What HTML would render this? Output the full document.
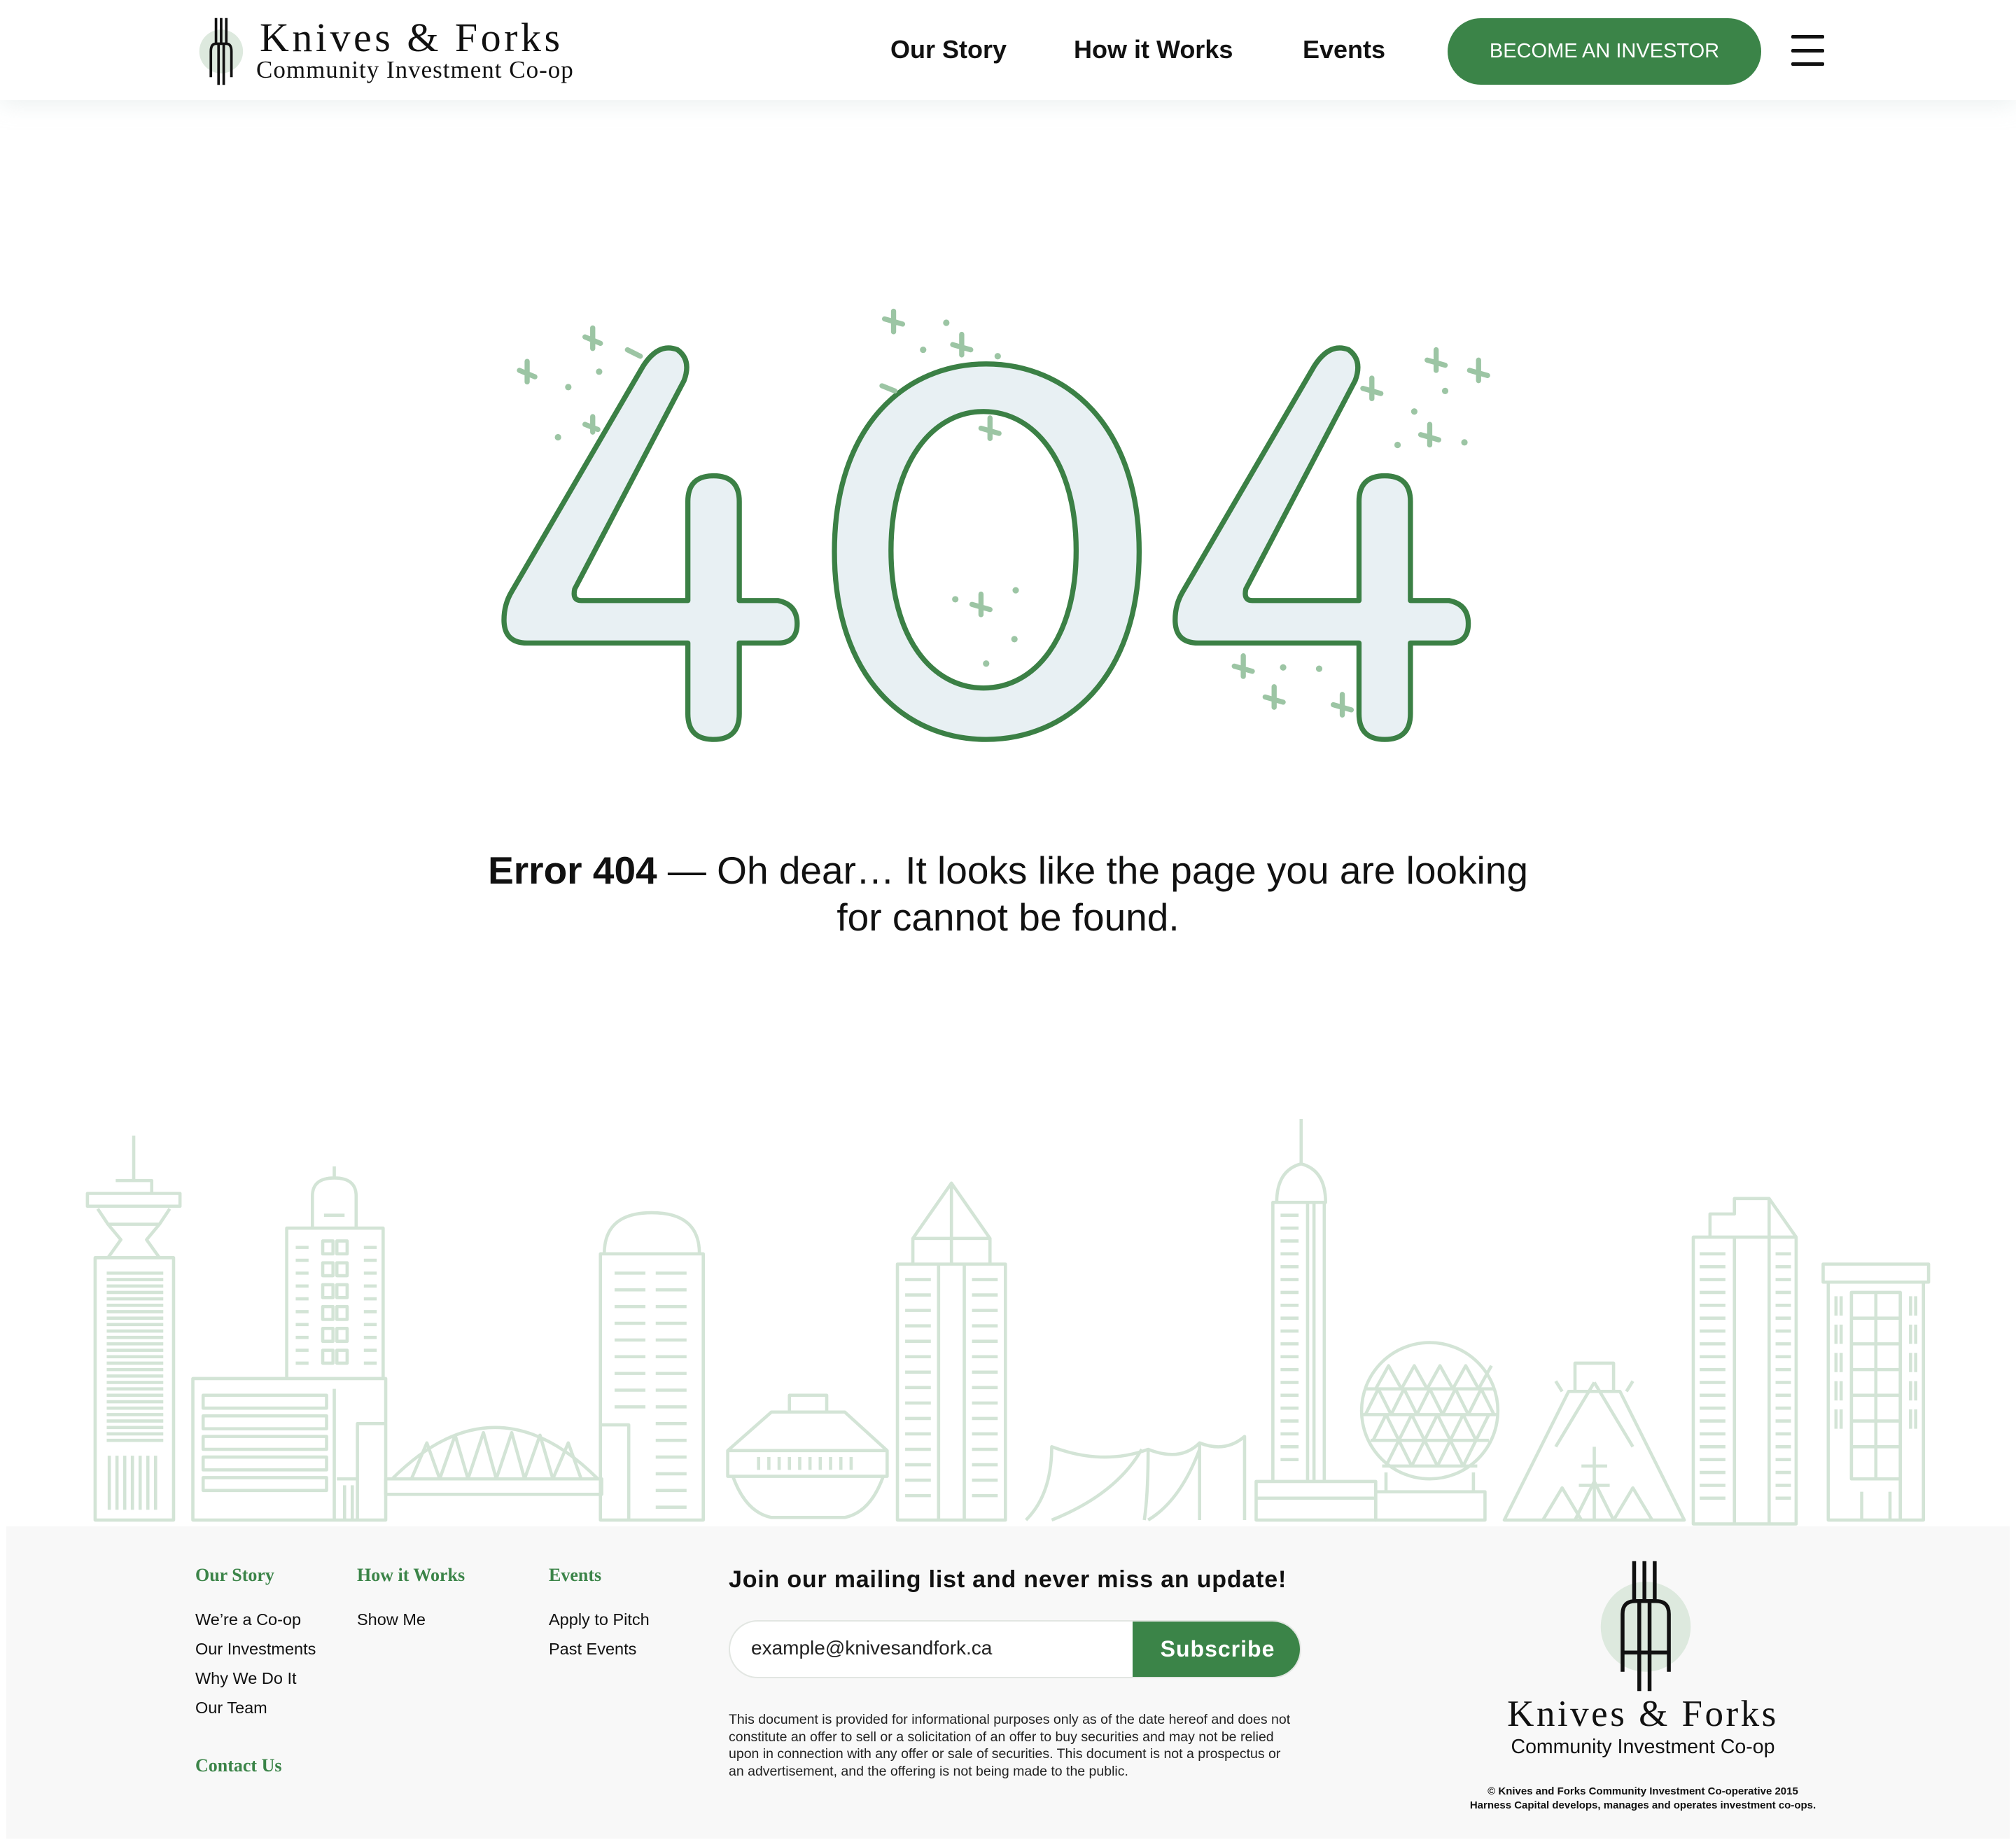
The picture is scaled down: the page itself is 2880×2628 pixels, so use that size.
<!DOCTYPE html>
<html><head><meta charset="utf-8"><style>
*{margin:0;padding:0;box-sizing:border-box}
body{width:2880px;height:2628px;position:relative;background:#fff;font-family:"Liberation Sans",sans-serif;color:#111;overflow:hidden}
.a{position:absolute;white-space:nowrap}
.hdr{position:absolute;left:0;top:0;width:2880px;height:143px;background:#fff;box-shadow:0 6px 30px rgba(200,215,215,0.35)}
.nav{font-size:36px;font-weight:bold;top:50px;color:#111}
.btn{left:2068px;top:26px;width:448px;height:95px;border-radius:48px;background:#3b8448;color:#fff;font-size:29px;text-align:center;line-height:95px}
.hb{left:2559px;width:47px;height:5px;background:#111;border-radius:2px}
.foot{position:absolute;left:9px;top:2180px;width:2862px;height:446px;background:#f8f8f8}
.fh{font-family:"Liberation Serif",serif;font-weight:bold;color:#3b8448;font-size:26px}
.fl{font-size:23.5px;color:#111}
</style></head><body>
<div class="hdr"></div>
<svg class="a" style="left:0;top:0" width="2880" height="2628" viewBox="0 0 1568 1430.8">
<circle cx="172" cy="40" r="17" fill="#dde9de"/>
<g stroke="#111" stroke-width="2" fill="none">
<path d="M168 14v20M172 14v20M176 14v20M164 60V40q0-6 4-6h8q4 0 4 6v20M170 34v32M174 34v32"/>
</g>
<g fill="#e8f0f3" stroke="#3b8045" stroke-width="4" stroke-linejoin="round">
<path id="four" d="M500 285Q512 266 527 272Q538 280 532 296L447 458Q445 467 452 467L535 467L535 390Q535 370 555 370Q575 370 575 390L575 467L605 467Q620 470 620 485Q620 500 605 500L575 500L575 555Q575 575 555 575Q535 575 535 555L535 500L410 500Q392 500 392 482Q392 470 398 460Z"/>
<use href="#four" x="522"/>
<path fill-rule="evenodd" d="M767 283C705 283 649 330 649 429C649 528 705 575 767 575C829 575 886 528 886 429C886 330 829 283 767 283ZM765 320C725 320 693 360 693 428C693 496 725 535 765 535C805 535 837 496 837 428C837 360 805 320 765 320Z"/>
</g>
<g stroke="#9cc5a4" stroke-width="4" stroke-linecap="round" fill="#9cc5a4">
<path d="M404 288l12 5M410 281l0 16M455 262l12 5M461 255l0 16M488 272l10 5M688 248l14 4M695 242l0 16M741 268l14 4M748 260l0 16M763 333l14 4M770 325l0 16M756 470l14 4M763 462l0 16M1110 280l14 4M1117 272l0 16M1143 288l14 4M1150 280l0 16M1060 302l14 4M1067 294l0 16M1105 338l14 4M1112 330l0 16M960 518l14 4M967 510l0 16M984 542l14 4M991 534l0 16M1037 548l14 4M1044 540l0 16M455 330l10 4M461 324l0 12M686 300l10 4"/>
<g stroke="none"><circle cx="442" cy="301" r="2.5"/><circle cx="434" cy="340" r="2.5"/><circle cx="466" cy="289" r="2.5"/><circle cx="736" cy="251" r="2.5"/><circle cx="718" cy="272" r="2.5"/><circle cx="776" cy="277" r="2.5"/><circle cx="743" cy="466" r="2.5"/><circle cx="790" cy="459" r="2.5"/><circle cx="789" cy="497" r="2.5"/><circle cx="767" cy="516" r="2.5"/><circle cx="1124" cy="304" r="2.5"/><circle cx="1100" cy="320" r="2.5"/><circle cx="1087" cy="346" r="2.5"/><circle cx="1139" cy="344" r="2.5"/><circle cx="998" cy="519" r="2.5"/><circle cx="1026" cy="520" r="2.5"/></g>
</g>
<g fill="none" stroke="#d3e4d6" stroke-width="2.5" stroke-linejoin="round">
<path d="M104 883v35M90 918h28v10M68 928h72v10H68zM76 940l8 12h40l8-12M84 952l10 12l-10 14M124 952l-10 12l10 14M74 978h61v204H74z"/>
<path d="M83 990h44M83 995h44M83 1000h44M83 1005h44M83 1010h44M83 1015h44M83 1020h44M83 1025h44M83 1030h44M83 1035h44M83 1040h44M83 1045h44M83 1050h44M83 1055h44M83 1060h44M83 1065h44M83 1070h44M83 1075h44M83 1080h44M83 1085h44M83 1090h44M83 1095h44M83 1100h44M83 1105h44M83 1110h44M83 1115h44M83 1120h44M85 1132v42M91 1132v42M97 1132v42M103 1132v42M109 1132v42M115 1132v42M121 1132v42"/>
<path d="M150 1072h150v110H150zM158 1085h96v10h-96zM158 1101h96v10h-96zM158 1117h96v10h-96zM158 1133h96v10h-96zM158 1149h96v10h-96zM223 1072V955h75v117M243 955v-25q0-14 17-14t17 14v25M260 916v-9M252 945h16M251 965h8v10h-8zM262 965h8v10h-8zM251 982h8v10h-8zM262 982h8v10h-8zM251 999h8v10h-8zM262 999h8v10h-8zM251 1016h8v10h-8zM262 1016h8v10h-8zM251 1033h8v10h-8zM262 1033h8v10h-8zM251 1050h8v10h-8zM262 1050h8v10h-8zM230 970h10M230 980h10M230 990h10M230 1000h10M230 1010h10M230 1020h10M230 1030h10M230 1040h10M230 1050h10M230 1060h10M283 970h10M283 980h10M283 990h10M283 1000h10M283 1010h10M283 1020h10M283 1030h10M283 1040h10M283 1050h10M283 1060h10M260 1080v102M278 1182v-75h22v75M262 1150h15M268 1155v27M274 1155v27"/>
<path d="M300 1150h168v12H300zM305 1150q80-80 160 0M320 1150l12-28l10 28l12-34l10 34l12-36l10 36l12-36l10 36l12-34l10 34l12-28l10 28"/>
<path d="M467 975h80v207h-80zM470 975q0-32 37-32t37 32M478 990h24M510 990h24M478 1003h24M510 1003h24M478 1016h24M510 1016h24M478 1029h24M510 1029h24M478 1042h24M510 1042h24M478 1055h24M510 1055h24M478 1068h24M510 1068h24M478 1081h24M510 1081h24M478 1094h24M510 1094h24M510 1107h24M510 1120h24M510 1133h24M510 1146h24M510 1159h24M510 1172h24M467 1108h22v74"/>
<path d="M614 1085h29v13h-29zM600 1098h57l33 30H566zM566 1128h124v20H566zM570 1148q10 28 30 32h57q20-4 30-32M590 1133v10M598 1133v10M606 1133v10M614 1133v10M622 1133v10M630 1133v10M638 1133v10M646 1133v10M654 1133v10M662 1133v10"/>
<path d="M698 983h84v199h-84zM710 983v-20l30-43l30 43v20M710 963h60M740 920v63M730 983v199M750 983v199M704 995h20M704 1007h20M704 1019h20M704 1031h20M704 1043h20M704 1055h20M704 1067h20M704 1079h20M704 1091h20M704 1103h20M704 1115h20M704 1127h20M704 1139h20M704 1151h20M704 1163h20M756 995h20M756 1007h20M756 1019h20M756 1031h20M756 1043h20M756 1055h20M756 1067h20M756 1079h20M756 1091h20M756 1103h20M756 1115h20M756 1127h20M756 1139h20M756 1151h20M756 1163h20"/>
<path d="M798 1182q20-20 20-57q40 15 75 2q0 35-3 55M893 1127q25 10 40-5q0 40 0 60M933 1122q20 8 35-5v65M818 1182q50-20 70-55M893 1182q25-15 40-55"/>
<path d="M1012 870v35M993 935q0-25 19-30q19 5 19 30zM990 935h40v217h-40zM996 945h14M996 955h14M996 965h14M996 975h14M996 985h14M996 995h14M996 1005h14M996 1015h14M996 1025h14M996 1035h14M996 1045h14M996 1055h14M996 1065h14M996 1075h14M996 1085h14M996 1095h14M996 1105h14M996 1115h14M996 1125h14M996 1135h14M1017 935v217M1022 935v217M977 1152h93v30h-93zM977 1165h93"/>
<circle cx="1112" cy="1097" r="53"/>
<path d="M1062 1080h100M1060 1100h104M1066 1120h92M1075 1140h74M1070 1080l10-18l10 18l10-18l10 18l10-18l10 18l10-18l10 18l10-18M1062 1100l10-20l10 20l10-20l10 20l10-20l10 20l10-20l10 20l10-20l10 20M1068 1120l10-20l10 20l10-20l10 20l10-20l10 20l10-20l10 20l10-20M1078 1140l10-20l10 20l10-20l10 20l10-20l10 20l10-20M1078 1145v15h68v-15M1070 1160h85v22h-85z"/>
<path d="M1170 1182l50-100h40l50 100zM1225 1082v-22h30v22M1215 1082l-5-8M1265 1082l5-8M1240 1075l-30 50M1240 1075l30 50M1200 1182l15-25l15 25M1225 1182l15-30l15 30M1255 1182l15-25l15 25M1230 1140h20M1228 1155h24M1240 1125v57"/>
<path d="M1317 962h80v223h-80zM1330 962v-18h19v-12h27v30M1376 932l21 30M1349 962v223M1376 962v223M1322 975h20M1322 985h20M1322 995h20M1322 1005h20M1322 1015h20M1322 1025h20M1322 1035h20M1322 1045h20M1322 1055h20M1322 1065h20M1322 1075h20M1322 1085h20M1322 1095h20M1322 1105h20M1322 1115h20M1322 1125h20M1322 1135h20M1322 1145h20M1322 1155h20M1322 1165h20M1381 975h12M1381 985h12M1381 995h12M1381 1005h12M1381 1015h12M1381 1025h12M1381 1035h12M1381 1045h12M1381 1055h12M1381 1065h12M1381 1075h12M1381 1085h12M1381 1095h12M1381 1105h12M1381 1115h12M1381 1125h12M1381 1135h12M1381 1145h12M1381 1155h12M1381 1165h12"/>
<path d="M1418 983h82v14h-82zM1422 997h74v185h-74zM1440 1005h38v145h-38zM1440 1025h38M1440 1045h38M1440 1065h38M1440 1085h38M1440 1105h38M1440 1125h38M1459 1005v145M1428 1008v15M1432 1008v15M1428 1030v15M1432 1030v15M1428 1052v15M1432 1052v15M1428 1074v15M1432 1074v15M1428 1096v15M1432 1096v15M1486 1008v15M1490 1008v15M1486 1030v15M1490 1030v15M1486 1052v15M1490 1052v15M1486 1074v15M1490 1074v15M1486 1096v15M1490 1096v15M1440 1150h38v32M1448 1160v22M1470 1160v22"/>
</g>
</svg>
<div class="a" style="left:371px;top:20px;font-family:'Liberation Serif',serif;font-size:58px;letter-spacing:4.5px;color:#111">Knives &amp; Forks</div>
<div class="a" style="left:366px;top:80px;font-family:'Liberation Serif',serif;font-size:35px;letter-spacing:1px;color:#111">Community Investment Co-op</div>
<div class="a nav" style="left:1272px">Our Story</div>
<div class="a nav" style="left:1534px">How it Works</div>
<div class="a nav" style="left:1861px">Events</div>
<div class="a btn">BECOME AN INVESTOR</div>
<div class="a hb" style="top:50px"></div>
<div class="a hb" style="top:70px"></div>
<div class="a hb" style="top:89px"></div>
<div class="a" style="left:640px;top:1210px;width:1600px;text-align:center;font-size:55px;line-height:67px;color:#111"><b>Error 404</b> — Oh dear… It looks like the page you are looking<br>for cannot be found.</div>
<div class="foot"></div>
<svg class="a" style="left:0;top:0" width="2880" height="2628" viewBox="0 0 1568 1430.8">
<circle cx="1280" cy="1265" r="35" fill="#dde9de"/>
<g stroke="#111" stroke-width="3" fill="none">
<path d="M1271 1214v30M1279 1214v30M1287 1214v30M1262 1300v-45q0-10 10-10h16q10 0 10 10v45M1275 1245v70M1283 1245v70M1262 1285h36"/>
</g>
</svg>
<div class="a fh" style="left:279px;top:2235px">Our Story</div>
<div class="a fh" style="left:510px;top:2235px">How it Works</div>
<div class="a fh" style="left:784px;top:2235px">Events</div>
<div class="a fh" style="left:279px;top:2507px">Contact Us</div>
<div class="a fl" style="left:279px;top:2300px">We’re a Co-op</div>
<div class="a fl" style="left:279px;top:2342px">Our Investments</div>
<div class="a fl" style="left:279px;top:2384px">Why We Do It</div>
<div class="a fl" style="left:279px;top:2426px">Our Team</div>
<div class="a fl" style="left:510px;top:2300px">Show Me</div>
<div class="a fl" style="left:784px;top:2300px">Apply to Pitch</div>
<div class="a fl" style="left:784px;top:2342px">Past Events</div>
<div class="a" style="left:1041px;top:2237px;font-size:34px;font-weight:bold;letter-spacing:0.8px;color:#111">Join our mailing list and never miss an update!</div>
<div class="a" style="left:1041px;top:2314px;width:818px;height:83px;border-radius:42px;background:#fff;border:2px solid #e2e6e2;overflow:hidden">
<div class="a" style="left:30px;top:22px;font-size:28px;color:#222">example@knivesandfork.ca</div>
<div class="a" style="left:575px;top:-2px;width:243px;height:83px;background:#3b8448;color:#fff;font-size:32px;font-weight:bold;letter-spacing:1px;text-align:center;line-height:83px">Subscribe</div>
</div>
<div class="a" style="left:1041px;top:2444px;width:812px;white-space:normal;font-size:19.5px;line-height:24.5px;color:#222">This document is provided for informational purposes only as of the date hereof and does not constitute an offer to sell or a solicitation of an offer to buy securities and may not be relied upon in connection with any offer or sale of securities. This document is not a prospectus or an advertisement, and the offering is not being made to the public.</div>
<div class="a" style="left:2047px;top:2418px;width:600px;text-align:center;font-family:'Liberation Serif',serif;font-size:53px;letter-spacing:3.5px;color:#111">Knives &amp; Forks</div>
<div class="a" style="left:2047px;top:2479px;width:600px;text-align:center;font-size:28.5px;color:#111">Community Investment Co-op</div>
<div class="a" style="left:2047px;top:2549px;width:600px;text-align:center;font-size:15px;font-weight:bold;line-height:20px;color:#111">© Knives and Forks Community Investment Co-operative 2015<br>Harness Capital develops, manages and operates investment co-ops.</div>
</body></html>
